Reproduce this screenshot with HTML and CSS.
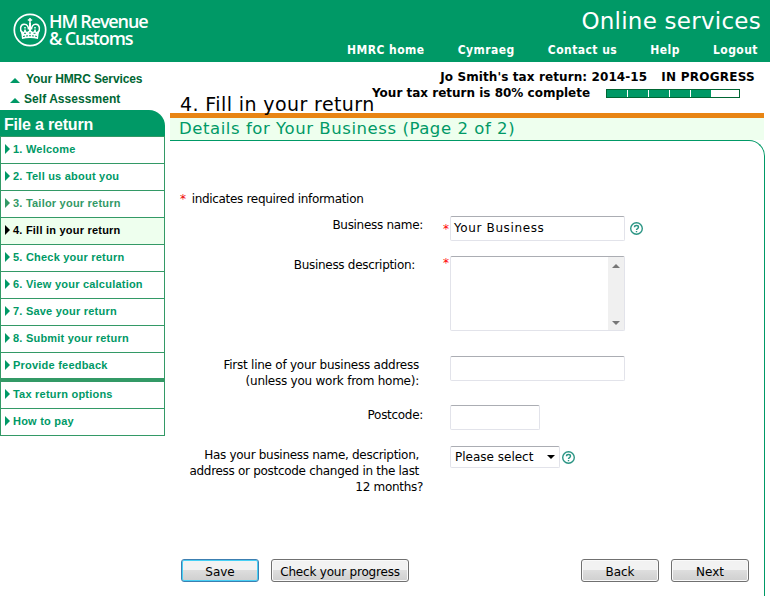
FILE: index.html
```
<!DOCTYPE html>
<html lang="en">
<head>
<meta charset="utf-8">
<title>Fill in your return</title>
<link rel="stylesheet" href="styles.css">
</head>
<body>
<div class="page">
  <header class="header">
    <div class="logo">
      <svg class="crest" width="34" height="34" viewBox="0 0 34 34">
        <circle cx="17" cy="17" r="15.700" fill="none" stroke="#fff" stroke-width="1.700"/>
        <g fill="none" stroke="#fff" stroke-width="1.500">
          <path d="M17 5v5M14.800 7h4.400"/>
          <path d="M9.500 20.500C6 16.500 7.500 11.500 11 11.300c3.500-.2 4.500 2.700 4.500 5.200M24.500 20.500c3.500-4 2-9-1.500-9.200-3.500-.2-4.500 2.700-4.500 5.200"/>
          <path d="M17 10v9" stroke-width="2"/>
          <path d="M12 14v4M22 14v4" stroke-dasharray="1.500 1"/>
        </g>
        <path fill="#fff" d="M8 17.500l2.500 1.500 1.500-2 2 2 3-2 3 2 2-2 1.500 2 2.500-1.500-1 8.500q-8-2-16 0z"/>
        <path d="M10 23.500q7-1.500 14 0M11 20.300h2.500M16 20h2M20.500 20.300h2.500" fill="none" stroke="#009966" stroke-dasharray="2 1"/>
      </svg>
      <div class="logo-text">HM Revenue<br>&amp; Customs</div>
    </div>
    <div class="header-right">
      <div class="service"><span>Online services</span></div>
      <nav class="topnav"><a>HMRC home</a><a>Cymraeg</a><a>Contact us</a><a>Help</a><a>Logout</a></nav>
    </div>
  </header>
  <div class="columns">
    <aside class="sidebar">
      <div class="up"><i></i><span class="up1">Your HMRC Services</span></div>
      <div class="up"><i></i><span class="up2">Self Assessment</span></div>
      <h2>File a return</h2>
      <ul>
        <li>1. Welcome</li>
        <li>2. Tell us about you</li>
        <li class="visited">3. Tailor your return</li>
        <li class="current">4. Fill in your return</li>
        <li>5. Check your return</li>
        <li>6. View your calculation</li>
        <li>7. Save your return</li>
        <li>8. Submit your return</li>
        <li class="last">Provide feedback</li>
        <li>Tax return options</li>
        <li>How to pay</li>
      </ul>
    </aside>
    <main>
      <div class="top">
        <h1>4. Fill in your return</h1>
        <div class="status">
          <div class="who"><span class="w1">Jo Smith's tax return: 2014-15</span><span class="w2">IN PROGRESS</span></div>
          <div class="prog"><span>Your tax return is 80% complete</span>
            <div class="bar"><b></b><b></b><b></b><b></b><b></b></div></div>
        </div>
      </div>
      <h3><span>Details for Your Business (Page 2 of 2)</span></h3>
      <form class="panel">
        <p class="note"><em>*</em><span>indicates required information</span></p>
        <div class="row name"><label><span>Business name:</span></label><em>*</em><div class="box wide"><span>Your Business</span></div>
          <svg class="help" width="13" height="13" viewBox="0 0 13 13"><circle cx="6.500" cy="6.500" r="5.800"/><path d="M4.500 5.200c0-2.300 4-2.300 4 0 0 1.400-2 1.300-2 2.800M6.500 9v1.200"/></svg></div>
        <div class="row desc"><label><span>Business description:</span></label><em>*</em><div class="box area"><div class="scroll"><i></i><i class="down"></i></div></div></div>
        <div class="row addr"><label><span>First line of your business address</span><span>(unless you work from home):</span></label><div class="box wide"></div></div>
        <div class="row post"><label><span>Postcode:</span></label><div class="box short"></div></div>
        <div class="row changed"><label><span class="c1">Has your business name, description,</span><span class="c2">address or postcode changed in the last</span><span>12 months?</span></label><div class="box select"><span>Please select</span><i></i></div>
          <svg class="help" width="13" height="13" viewBox="0 0 13 13"><circle cx="6.500" cy="6.500" r="5.800"/><path d="M4.500 5.200c0-2.300 4-2.300 4 0 0 1.400-2 1.300-2 2.800M6.500 9v1.200"/></svg></div>
        <div class="buttons">
          <button type="button" class="save">Save</button>
          <button type="button" class="check">Check your progress</button>
          <button type="button" class="back">Back</button>
          <button type="button">Next</button>
        </div>
      </form>
    </main>
  </div>
</div>
</body>
</html>
```
FILE: styles.css
```
* { box-sizing: border-box; }
body { margin: 0; background: #fff; color: #000; font: 12px/16px "DejaVu Sans", sans-serif; overflow: hidden; }
span, a, h1, button { white-space: nowrap; }
em { font-style: normal; color: #e00; }
.page { width: 770px; height: 596px; }
.header { display: flex; justify-content: space-between; height: 62px; background: #009966; color: #fff; }
.logo { display: flex; padding: 13px 0 0 13px; }
.logo-text { padding-left: 2px; font: 600 18px/17px "Open Sans", sans-serif; letter-spacing: -1.15px; white-space: nowrap; }
.service { height: 42px; padding: 6px 9px 0 0; text-align: right; font-size: 23px; line-height: 30px; letter-spacing: .25px; }
.topnav { display: flex; justify-content: space-between; width: 411px; margin-right: 12px; font: bold 12px/16px "DejaVu Sans Condensed", sans-serif; letter-spacing: .45px; }
.columns { display: flex; gap: 5px; height: 534px; }
.sidebar { width: 165px; padding-top: 7px; font-family: "Liberation Sans", sans-serif; }
.up { display: flex; align-items: center; height: 20px; color: #006633; font-weight: bold; }
.up i { width: 0; margin: 2px 6px 0 10px; border: solid transparent; border-width: 0 5px 5px; border-bottom-color: #009966; }
.up1 { letter-spacing: -.12px; }
.up2 { margin-left: -2px; letter-spacing: .05px; }
.sidebar h2 { height: 26px; margin: 1px 0 0; padding-left: 4px; border-radius: 0 16px 0 0; background: #009966; color: #fff; font-size: 16px; line-height: 29px; letter-spacing: -.2px; }
.sidebar ul { margin: 0; padding: 0; list-style: none; border: 1px solid #339966; }
.sidebar li { display: flex; align-items: center; height: 27px; padding-bottom: 2px; border-bottom: 1px solid #339966; color: #009966; font-size: 11px; font-weight: bold; letter-spacing: .22px; }
.sidebar li::before { content: ""; margin: 0 3px 0 4px; border: solid transparent; border-width: 5px 0 5px 5px; border-left-color: currentColor; }
.sidebar li:last-child { border: 0; height: 26px; }
.sidebar .last { height: 29px; border-bottom-width: 4px; }
.sidebar .visited { color: #339966; }
.sidebar .current { color: #000; background: #eeffee; }
main { display: flex; flex-direction: column; width: 595px; }
.top { display: flex; justify-content: space-between; width: 594px; height: 56px; border-bottom: 5px solid #e88514; }
h1 { margin: 30px 0 -5px 10px; font-size: 19px; line-height: 24px; font-weight: normal; letter-spacing: .4px; }
.status { padding-top: 7px; width: 392px; margin-left: -20px; font-weight: bold; }
.who { display: flex; justify-content: flex-end; gap: 14px; padding-right: 9px; }
.w1 { letter-spacing: .1px; }
.w2 { letter-spacing: .25px; }
.prog { display: flex; justify-content: flex-end; gap: 16px; padding-right: 24px; }
.bar { display: flex; gap: 1px; width: 134px; height: 9px; margin-top: 4px; border: 1px solid #006633; background: #fff; }
.bar b { width: 20px; background: #009966; }
h3 { width: 594px; height: 22px; margin: 0; padding-left: 9px; background: #eeffee; color: #009966; font-size: 16.5px; line-height: 21px; font-weight: normal; letter-spacing: .56px; }
.panel { flex: 1; border: solid #009966; border-width: 1px 1px 0 0; border-radius: 0 16px 0 0; padding: 50px 0 0 10px; }
.note { display: flex; gap: 6px; height: 25px; margin: 0; letter-spacing: -.32px; }
.row { display: flex; align-items: flex-start; }
.row label { display: flex; flex-direction: column; align-items: flex-end; width: 243px; margin-right: 27px; letter-spacing: -.3px; }
.row em { margin: 5px 1px 0 -7px; width: 6px; color: #f00; }
.box { position: relative; height: 25px; border: 1px solid #e2e3ea; border-top-color: #abadb3; border-radius: 2px; background: #fff; }
.wide { width: 175px; }
.help { fill: none; stroke: #2b9584; stroke-width: 1.4; margin: 6px 0 0 5px; }
.name { height: 40px; }
.name label { padding-top: 1px; }
.name .box span { display: block; padding: 3px; letter-spacing: .62px; }
.desc { height: 100px; }
.desc label { padding: 1px 8px 0 0; }
.desc em { margin-top: -1px; }
.area { width: 175px; height: 75px; }
.scroll { display: flex; flex-direction: column; justify-content: space-between; align-items: center; width: 16px; height: 73px; margin-left: auto; padding: 7px 0 5px; background: #f0f0f0; }
.scroll i { border: solid transparent; border-width: 0 4px 4px; border-bottom-color: #777; }
.scroll .down { transform: rotate(180deg); }
.addr { height: 49px; }
.addr label { padding: 1px 4px 0 0; letter-spacing: -.24px; }
.post { height: 41px; }
.post label { padding-top: 2px; }
.short { width: 90px; }
.changed { height: 113px; }
.changed label { padding: 1px 0 0; }
.c1, .c2 { margin-right: 4px; }
.select { display: flex; justify-content: space-between; width: 110px; height: 22px; padding: 2px 4px; }
.select i { height: 0; margin-top: 6px; border: solid transparent; border-width: 4px 4px 0; border-top-color: #000; }
.changed .help { margin: 5px 0 0 2px; }
.buttons { display: flex; gap: 12px; padding-left: 1px; }
button { width: 78px; height: 23px; padding: 2px 0 0; border: 1px solid #707070; border-radius: 3px; background: linear-gradient(#f2f2f2 0 48%, #dddddd 50%, #cfcfcf); box-shadow: inset 0 0 0 1px #fafafa; color: #000; font: 12px/16px "DejaVu Sans", sans-serif; }
.save { border-color: #3c7fb1; box-shadow: inset 0 0 0 1px #48d0f5; }
.check { width: 138px; letter-spacing: -.2px; }
.back { margin-left: 160px; }
```
